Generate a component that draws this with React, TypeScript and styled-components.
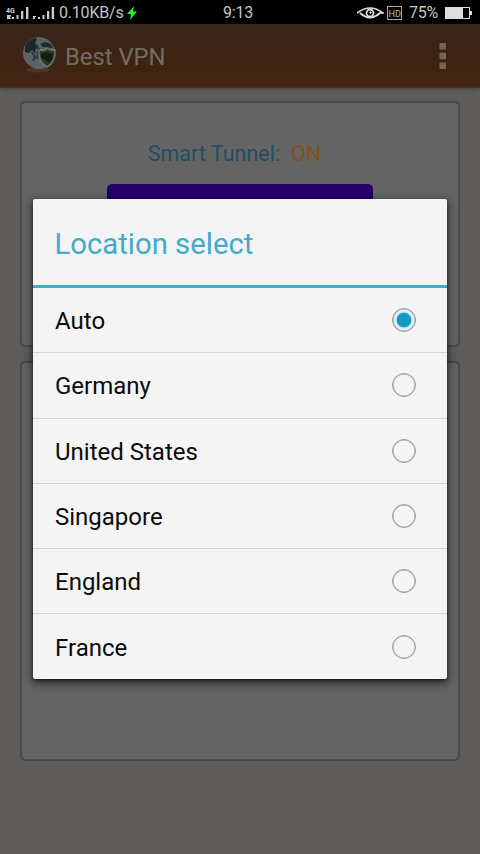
import React from "react";
import styled, { createGlobalStyle } from "styled-components";

const GlobalStyle = createGlobalStyle`
  * { box-sizing: border-box; }
  body { margin: 0; background: #5e5d5a; font-family: Roboto, "Noto Sans", sans-serif; }
`;

const Screen = styled.main`
  position: relative;
  width: 480px;
  height: 854px;
  overflow: hidden;
  background: #5e5d5a;
`;

const StatusBar = styled.div`
  display: grid;
  grid-template-columns: 1fr auto 1fr;
  align-items: center;
  height: 24px;
  padding: 0 8px 0 6px;
  background: #000;
  color: #c4c4c4;
  font-size: 16px;
  line-height: 24px;
  white-space: nowrap;
`;

const StatusGroup = styled.div<{ $end?: boolean }>`
  display: flex;
  align-items: center;
  justify-content: ${(p) => (p.$end ? "flex-end" : "flex-start")};
`;

const StatusText = styled.span<{ $width: number; $gap?: number }>`
  width: ${(p) => p.$width}px;
  margin-left: ${(p) => p.$gap ?? 0}px;
  padding-top: 1px;
  letter-spacing: -0.2px;
`;

const Icon = styled.svg<{ $gap?: number }>`
  display: block;
  flex: none;
  margin-left: ${(p) => p.$gap ?? 0}px;
`;

const AppBar = styled.header`
  display: flex;
  align-items: center;
  height: 64px;
  padding: 0 33px 0 21px;
  background: linear-gradient(#382619 0%, #3b2414 35%, #432410 95%, #4a3420 100%);
  box-shadow: 0 1px 4px rgba(0, 0, 0, 0.3);
`;

const AppTitle = styled.h1`
  flex: 1;
  margin: 2px 0 0 8px;
  color: #766b62;
  font-size: 23.8px;
  font-weight: 400;
  line-height: 30px;
`;

const Content = styled.div`
  display: flex;
  flex-direction: column;
  gap: 14px;
  padding: 13px 20px;
`;

const Card = styled.section<{ $height: number }>`
  display: flex;
  flex-direction: column;
  align-items: center;
  height: ${(p) => p.$height}px;
  padding-top: 37px;
  border: 2px solid #4a4a4a;
  border-radius: 5px;
  background: #646464;
`;

const TunnelStatus = styled.div`
  display: flex;
  gap: 11px;
  margin-right: 11px;
  color: #244e60;
  font-size: 21.5px;
  line-height: 28px;
`;

const TunnelState = styled.span`
  color: #83501f;
`;

const ConnectButton = styled.button`
  width: 266px;
  height: 60px;
  margin-top: 16px;
  border: 0;
  border-radius: 5px;
  background: #250069;
`;

const Overlay = styled.div`
  position: absolute;
  inset: 0;
  padding: 199px 33px 0;
`;

const Dialog = styled.section`
  height: 480px;
  border-radius: 2px;
  background: #f4f4f4;
  box-shadow: 0 3px 9px 1px rgba(0, 0, 0, 0.65), 0 1px 2px rgba(0, 0, 0, 0.5);
  overflow: hidden;
`;

const DialogTitle = styled.h2`
  height: 89px;
  margin: 0;
  padding-left: 21.5px;
  border-bottom: 3px solid #43aac9;
  color: #43aac9;
  font-size: 29.3px;
  font-weight: 400;
  line-height: 90px;
`;

const Options = styled.div`
  display: grid;
  grid-template-rows: repeat(6, 65.3px);
`;

const Option = styled.label`
  display: flex;
  align-items: center;
  justify-content: space-between;
  padding: 0 31px 0 22px;
  color: #0b0b0b;
  font-size: 24px;
  border-bottom: 1px solid #d4d4d4;
  &:last-child { border-bottom: 0; }
`;

const OptionName = styled.span`
  padding-top: 2px;
`;

const Radio = styled.input`
  appearance: none;
  width: 24px;
  height: 24px;
  margin: 0;
  border: 1px solid #9b9b9b;
  border-radius: 50%;
  box-shadow: inset 0 0 0 0.5px #a8a8a8;
  &:checked {
    background: radial-gradient(circle, #159bc8 0 6.8px, #c6eaf7 7.8px, #e6f6fb 10px);
  }
`;

const places = ["Auto", "Germany", "United States", "Singapore", "England", "France"];

const Signals = () => (
  <Icon width="50" height="16" viewBox="0 0 50 16" fill="#cacaca">
    <text x="0" y="8" fontSize="7" fontWeight="700" fontFamily="Roboto">4G</text>
    <path d="M1 10h4v1.500H4V13h1v1H1zM6 12h2v2H6zM10.500 10h2v4h-2zM15 6h2.300v8H15zM20 2h2.400v12H20z" />
    <path d="M27 11h3v1h-1v2h-2zM32 12h2v2h-2zM36.500 10h2v4h-2zM41 6h2.300v8H41zM45.700 2h2.400v12h-2.400z" />
  </Icon>
);

const Logo = () => (
  <Icon width="36" height="44" viewBox="0 0 36 44">
    <ellipse cx="17" cy="36" rx="12" ry="2.500" fill="#554b42" opacity=".5" />
    <circle cx="18" cy="19" r="16" fill="#5c6265" />
    <path d="M4 12c3-6 8-8 12-8l-2 5 3 4-3 3 1 4-4-4-3 3-4-1z" fill="#17292c" />
    <path d="M19 10l5-2 6 2 2 4-10-1zM5 15l5 1-3 3z" fill="#193125" />
    <path d="M11 18l3 5-2 4M15 10l3 6-2 9" fill="none" stroke="#273743" strokeWidth="2" />
    <path d="M18 16q6 1 8-2 3 3 8 2 1 12-8 17-9-5-8-17z" fill="#293b31" stroke="#6b746d" strokeWidth="1.500" />
    <path d="M20 20l5-2 7 2-1 5-3 4-3-3-5-2z" fill="#10200f" />
  </Icon>
);

export default function App() {
  return (
    <>
      <GlobalStyle />
      <Screen>
        <StatusBar>
          <StatusGroup>
            <Signals />
            <StatusText $width={66} $gap={3}>0.10KB/s</StatusText>
            <Icon width="11" height="16" viewBox="0 0 11 16" $gap={2}>
              <path d="M7 1L0 9h4L3 15l7-8.500H6z" fill="#29e92e" />
            </Icon>
          </StatusGroup>
          <StatusText $width={32}>9:13</StatusText>
          <StatusGroup $end>
            <Icon width="27" height="14" viewBox="0 0 27 14" fill="none" stroke="#dedede">
              <path d="M0 7Q13-3 26 7H23Q13 16 3 7" strokeWidth="1.700" />
              <circle cx="13" cy="7" r="3.500" strokeWidth="1.800" />
              <circle cx="13.500" cy="6.500" r=".7" fill="#dedede" />
            </Icon>
            <Icon width="16" height="14" viewBox="0 0 16 14" $gap={3}>
              <rect x=".5" y=".5" width="14" height="13" fill="none" stroke="#aaa" />
              <text x="1.500" y="10.500" fontSize="9" fontFamily="Roboto" fill="#b8b8b8">HD</text>
            </Icon>
            <StatusText $width={30} $gap={6}>75%</StatusText>
            <Icon width="27" height="12" viewBox="0 0 27 12" $gap={6}>
              <rect x=".5" y=".5" width="24" height="11" fill="none" stroke="#ddd" />
              <path d="M1 1h17v10H1zM25 4h2v4h-2z" fill="#ddd" />
            </Icon>
          </StatusGroup>
        </StatusBar>
        <AppBar>
          <Logo />
          <AppTitle>Best VPN</AppTitle>
          <Icon width="8" height="28" viewBox="0 0 8 28" fill="#786452">
            <path d="M.5 1h6.500v6.500H.5zM.5 10.800h6.500v6.500H.5zM.5 20.600h6.500v6.500H.5z" />
          </Icon>
        </AppBar>
        <Content>
          <Card $height={246}>
            <TunnelStatus><span>Smart Tunnel:</span><TunnelState>ON</TunnelState></TunnelStatus>
            <ConnectButton aria-label="Connect" />
          </Card>
          <Card $height={400} />
        </Content>
        <Overlay>
          <Dialog role="dialog">
            <DialogTitle>Location select</DialogTitle>
            <Options>
              {places.map((place) => (
                <Option key={place}>
                  <OptionName>{place}</OptionName>
                  <Radio type="radio" name="location" defaultChecked={place === "Auto"} />
                </Option>
              ))}
            </Options>
          </Dialog>
        </Overlay>
      </Screen>
    </>
  );
}
